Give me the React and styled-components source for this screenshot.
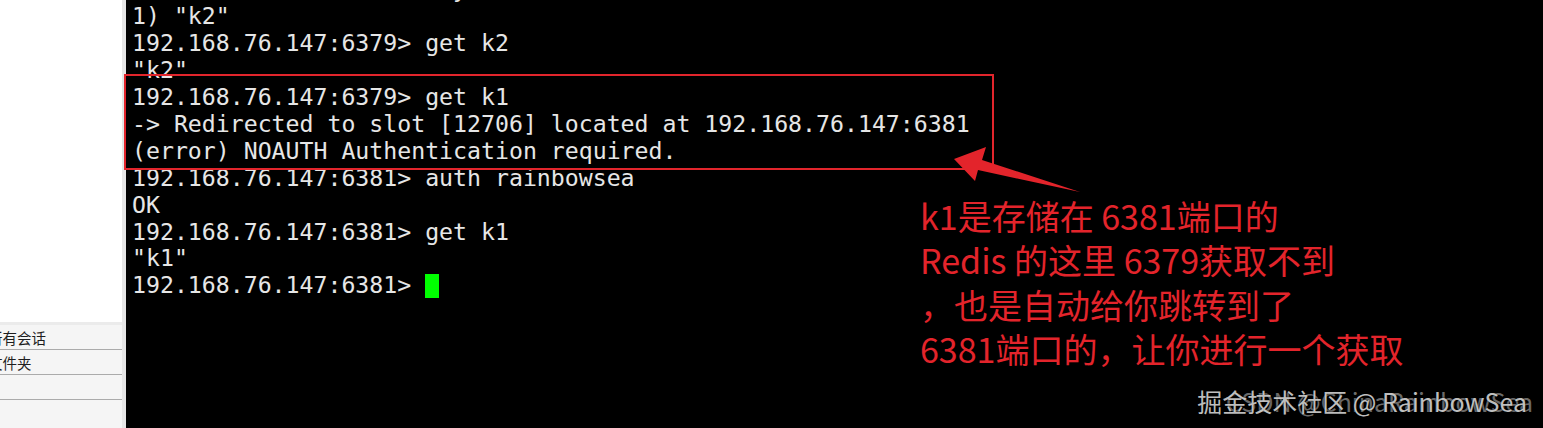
import React from "react";
import styled, { createGlobalStyle } from "styled-components";

const GlobalStyle = createGlobalStyle`
  html, body {
    margin: 0;
    padding: 0;
    background: #000;
  }
  body {
    width: 1543px;
    height: 428px;
    overflow: hidden;
  }
`;

const Page = styled.div`
  position: relative;
  display: flex;
  width: 1543px;
  height: 428px;
  overflow: hidden;
  background: #000;
`;

const Sidebar = styled.aside`
  display: flex;
  flex-direction: column;
  flex-shrink: 0;
  width: 122px;
  background: #fff;
  border-right: 4px solid #e6e6e6;
  overflow: hidden;
`;

const SidebarSpace = styled.div`
  flex: 1;
`;

const SessionList = styled.ul`
  display: flex;
  flex-direction: column;
  margin: 0;
  padding: 0;
  list-style: none;
  height: 103px;
  background: #f5f5f5;
  border-top: 3px solid #ebebeb;
`;

const SessionRow = styled.li`
  display: flex;
  align-items: center;
  height: ${(p) => (p.$last ? "auto" : "24px")};
  flex: ${(p) => (p.$last ? 1 : "none")};
  border-bottom: ${(p) => (p.$last ? "none" : "1px solid #ababab")};
  font-family: "Noto Sans CJK SC", "Noto Sans", sans-serif;
  font-size: 14.5px;
  color: #1e1e1e;
  white-space: nowrap;
`;

const RowLabel = styled.span`
  margin-left: -12px;
`;

const Terminal = styled.main`
  flex: 1;
  padding-left: 6px;
  background: #000;
  overflow: hidden;
  font-family: "DejaVu Sans Mono", "Liberation Mono", monospace;
  font-size: 23.2px;
  line-height: 26.9px;
  color: #e6e6e6;
`;

const Lines = styled.div`
  margin-top: -23.6px;
`;

const Line = styled.div`
  white-space: pre;
`;

const Cursor = styled.span`
  display: inline-block;
  width: 14px;
  height: 24px;
  vertical-align: -5px;
  background: #00ff00;
`;

const HighlightBox = styled.div`
  position: absolute;
  left: 124px;
  top: 74px;
  width: 866px;
  height: 92px;
  border: 2px solid #e2252c;
  pointer-events: none;
`;

const ArrowLayer = styled.svg`
  position: absolute;
  left: 0;
  top: 0;
  pointer-events: none;
`;

const Note = styled.div`
  position: absolute;
  left: 920px;
  top: 194px;
  font-family: "Noto Sans CJK SC", "Noto Sans", sans-serif;
  font-size: 34px;
  line-height: 44.3px;
  color: #e3242b;
  white-space: pre;
`;

const Watermark = styled.div`
  position: absolute;
  right: ${(p) => (p.$faint ? "10px" : "16px")};
  bottom: 12px;
  font-family: "Noto Sans CJK SC", "Noto Sans", sans-serif;
  font-size: 25px;
  line-height: 30px;
  white-space: nowrap;
  color: ${(p) => (p.$faint ? "rgba(215,215,215,0.5)" : "rgba(225,225,225,0.85)")};
  text-shadow: 0 0 2px rgba(0, 0, 0, 0.9);
`;

const terminalLines = [
  '192.168.76.147:6379> keys *',
  '1) "k2"',
  '192.168.76.147:6379> get k2',
  '"k2"',
  '192.168.76.147:6379> get k1',
  '-> Redirected to slot [12706] located at 192.168.76.147:6381',
  '(error) NOAUTH Authentication required.',
  '192.168.76.147:6381> auth rainbowsea',
  'OK',
  '192.168.76.147:6381> get k1',
  '"k1"',
];

const noteLines = [
  "k1是存储在 6381端口的",
  "Redis 的这里 6379获取不到",
  "，也是自动给你跳转到了",
  "6381端口的，让你进行一个获取",
];

const sessions = ["所有会话", "文件夹", "", ""];

function App() {
  return (
    <>
      <GlobalStyle />
      <Page>
        <Sidebar>
          <SidebarSpace />
          <SessionList>
            {sessions.map((s, i) => (
              <SessionRow key={i} $last={i === sessions.length - 1}>
                <RowLabel>{s}</RowLabel>
              </SessionRow>
            ))}
          </SessionList>
        </Sidebar>
        <Terminal>
          <Lines>
            {terminalLines.map((l, i) => (
              <Line key={i}>{l}</Line>
            ))}
            <Line>
              {"192.168.76.147:6381> "}
              <Cursor />
            </Line>
          </Lines>
        </Terminal>

        <HighlightBox />
        <ArrowLayer width="1543" height="428" viewBox="0 0 1543 428">
          <polygon
            points="954,159 986,147 982,160 1080,192 978,170 975,181"
            fill="#e3242b"
          />
        </ArrowLayer>

        <Note>
          {noteLines.map((l, i) => (
            <div key={i}>{l}</div>
          ))}
        </Note>

        <Watermark $faint>CSDN @ChinaRainbowSea</Watermark>
        <Watermark>掘金技术社区 @ RainbowSea</Watermark>
      </Page>
    </>
  );
}

export default App;
